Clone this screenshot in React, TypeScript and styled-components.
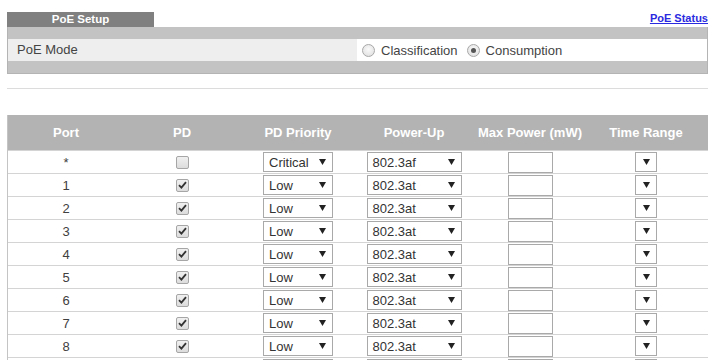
import styled, { createGlobalStyle } from "styled-components";

type Priority = "Critical" | "Low";

interface IPortRow {
    port: string;
    pd: boolean;
    priority: Priority;
    powerUp: string;
}

const rows: IPortRow[] = [
    { port: "*", pd: false, priority: "Critical", powerUp: "802.3af" },
    ...Array.from({ length: 9 }, (_, i) => ({
        port: String(i + 1),
        pd: true,
        priority: "Low" as Priority,
        powerUp: "802.3at",
    })),
];

const columns = ["Port", "PD", "PD Priority", "Power-Up", "Max Power (mW)", "Time Range"];

const GlobalStyle = createGlobalStyle`
    html, body {
        margin: 0;
        padding: 0;
        overflow: hidden;
        background: #fff;
    }
    body {
        font-family: "Liberation Sans", Arial, sans-serif;
        font-size: 13px;
        color: #333;
    }
`;

const Arrow = () => (
    <svg width="7" height="6" viewBox="0 0 7 6">
        <path d="M0 0 L7 0 L3.5 6 Z" fill="#222" />
    </svg>
);

const Check = () => (
    <svg width="9" height="8" viewBox="0 0 9 8">
        <path d="M1 4.2 L3.4 6.6 L8 1.2" stroke="#333" strokeWidth="1.8" fill="none" />
    </svg>
);

const Dropdown = ({ value, width }: { value: string; width: number }) => (
    <SelectBox width={width}>
        <span className="value">{value}</span>
        <Arrow />
    </SelectBox>
);

export default function App() {
    return (
        <Page>
            <GlobalStyle />
            <TopBar>
                <Tab>PoE Setup</Tab>
                <StatusLink href="#">PoE Status</StatusLink>
            </TopBar>
            <Panel>
                <Band />
                <ModeRow>
                    <LabelCell>PoE Mode</LabelCell>
                    <OptionCell>
                        <Radio checked={false} />
                        <span>Classification</span>
                        <Radio checked={true} />
                        <span>Consumption</span>
                    </OptionCell>
                </ModeRow>
                <Band />
            </Panel>
            <Rule />
            <Table>
                <HeaderRow>
                    {columns.map((c) => (
                        <HeadCell key={c}>{c}</HeadCell>
                    ))}
                </HeaderRow>
                {rows.map((r) => (
                    <Row key={r.port}>
                        <Cell>{r.port}</Cell>
                        <Cell>
                            <CheckBox>{r.pd && <Check />}</CheckBox>
                        </Cell>
                        <Cell>
                            <Dropdown value={r.priority} width={70} />
                        </Cell>
                        <Cell>
                            <Dropdown value={r.powerUp} width={95} />
                        </Cell>
                        <Cell>
                            <TextField />
                        </Cell>
                        <Cell>
                            <Dropdown value="" width={22} />
                        </Cell>
                    </Row>
                ))}
            </Table>
        </Page>
    );
}

const Page = styled.div`
    padding: 12px 3px 0 7px;
`;

const TopBar = styled.div`
    display: flex;
    justify-content: space-between;
    align-items: flex-start;
`;

const Tab = styled.div`
    width: 147px;
    height: 15px;
    line-height: 15px;
    background: #808080;
    color: #fff;
    font-size: 11.5px;
    font-weight: 700;
    text-align: center;
`;

const StatusLink = styled.a`
    color: #2a2ae0;
    font-size: 11px;
    font-weight: 700;
    line-height: 13px;
    text-decoration: underline;
`;

const Panel = styled.div`
    border: 1px solid #b4b4b4;
    border-top: none;
    background: #c3c3c3;
`;

const Band = styled.div`
    height: 12px;
`;

const ModeRow = styled.div`
    display: grid;
    grid-template-columns: 349px 1fr;
    height: 22px;
`;

const LabelCell = styled.div`
    background: #eeeeee;
    padding-left: 9px;
    line-height: 22px;
    color: #444;
`;

const OptionCell = styled.div`
    background: #fff;
    display: flex;
    align-items: center;
    padding-left: 5px;
    gap: 6px;
    color: #444;

    span + div {
        margin-left: 3px;
    }
`;

const Radio = styled.div<{ checked: boolean }>`
    width: 11px;
    height: 11px;
    border-radius: 50%;
    border: 1px solid #a8a8a8;
    background: radial-gradient(circle at 50% 40%, #fafafa, #dcdcdc);
    display: flex;
    align-items: center;
    justify-content: center;

    &::after {
        content: "";
        display: ${(p) => (p.checked ? "block" : "none")};
        width: 5px;
        height: 5px;
        border-radius: 50%;
        background: #555;
    }
`;

const Rule = styled.div`
    height: 1px;
    background: #dcdcdc;
    margin: 14px 0 26px;
`;

const Table = styled.div`
    border-left: 1px solid #c4c4c4;
    width: 700px;
`;

const HeaderRow = styled.div`
    display: grid;
    grid-template-columns: repeat(6, 116px);
    height: 35px;
    background: #b3b3b3;
`;

const HeadCell = styled.div`
    display: flex;
    align-items: center;
    justify-content: center;
    color: #fff;
    font-weight: 700;
    font-size: 13px;
`;

const Row = styled.div`
    display: grid;
    grid-template-columns: repeat(6, 116px);
    height: 22px;
    border-top: 1px solid #d4d4d4;
`;

const Cell = styled.div`
    display: flex;
    align-items: center;
    justify-content: center;
    color: #404040;
`;

const CheckBox = styled.div`
    width: 11px;
    height: 11px;
    border: 1px solid #a6a6a6;
    border-radius: 2px;
    background: linear-gradient(#f0f0f0, #dcdcdc);
    display: flex;
    align-items: center;
    justify-content: center;
`;

const SelectBox = styled.div<{ width: number }>`
    box-sizing: border-box;
    width: ${(p) => p.width}px;
    height: 20px;
    border: 1px solid #a9a9a9;
    background: #fff;
    display: flex;
    align-items: center;
    justify-content: space-between;
    padding: 0 6px 0 5px;
    color: #333;

    .value {
        font-size: 13px;
    }
`;

const TextField = styled.div`
    box-sizing: border-box;
    width: 45px;
    height: 21px;
    border: 1px solid #a9a9a9;
    background: #fff;
`;
